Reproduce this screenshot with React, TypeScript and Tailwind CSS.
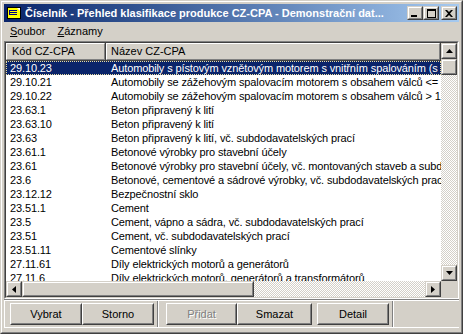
import React from "react";

const rows: [string, string][] = [
  ["29.10.23", "Automobily s pístovým vznětovým motorem s vnitřním spalováním (s naftovým nebo polonaftovým motorem)"],
  ["29.10.21", "Automobily se zážehovým spalovacím motorem s obsahem válců <= 1 500 cm3"],
  ["29.10.22", "Automobily se zážehovým spalovacím motorem s obsahem válců > 1 500 cm3"],
  ["23.63.1", "Beton připravený k lití"],
  ["23.63.10", "Beton připravený k lití"],
  ["23.63", "Beton připravený k lití, vč. subdodavatelských prací"],
  ["23.61.1", "Betonové výrobky pro stavební účely"],
  ["23.61", "Betonové výrobky pro stavební účely, vč. montovaných staveb a subdodavatelských prací"],
  ["23.6", "Betonové, cementové a sádrové výrobky, vč. subdodavatelských prací"],
  ["23.12.12", "Bezpečnostní sklo"],
  ["23.51.1", "Cement"],
  ["23.5", "Cement, vápno a sádra, vč. subdodavatelských prací"],
  ["23.51", "Cement, vč. subdodavatelských prací"],
  ["23.51.11", "Cementové slínky"],
  ["27.11.61", "Díly elektrických motorů a generátorů"],
  ["27.11.6", "Díly elektrických motorů, generátorů a transformátorů"],
];

// raised 3d box like scrollbar buttons and caption buttons
function Raised({ className = "", children }: { className?: string; children?: React.ReactNode }) {
  return (
    <div className={`border border-t-[#d4d0c8] border-l-[#d4d0c8] border-r-[#404040] border-b-[#404040] ${className}`}>
      <div className="w-full h-full border border-t-white border-l-white border-r-[#808080] border-b-[#808080] bg-[#d4d0c8] flex items-center justify-center">
        {children}
      </div>
    </div>
  );
}

function PushButton({ label, width, disabled }: { label: string; width: string; disabled?: boolean }) {
  return (
    <div className={`h-[22px] ${width} border border-t-white border-l-white border-r-[#404040] border-b-[#404040]`}>
      <div className="w-full h-full border border-t-[#d4d0c8] border-l-[#d4d0c8] border-r-[#808080] border-b-[#808080] flex items-center justify-center">
        {disabled ? (
          <span className="text-[#808080] [text-shadow:1px_1px_0_#ffffff]">{label}</span>
        ) : (
          <span className="text-black">{label}</span>
        )}
      </div>
    </div>
  );
}

const Arrow = ({ dir }: { dir: "up" | "down" | "left" | "right" }) => {
  const pts = {
    up: "3.5,0 7,4 0,4",
    down: "0,0 7,0 3.5,4",
    left: "4,0 4,7 0,3.5",
    right: "0,0 4,3.5 0,7",
  }[dir];
  const vertical = dir === "up" || dir === "down";
  return (
    <svg width={vertical ? 7 : 4} height={vertical ? 4 : 7} viewBox={vertical ? "0 0 7 4" : "0 0 4 7"}>
      <polygon points={pts} fill="#000" />
    </svg>
  );
};

const checker = "bg-[repeating-conic-gradient(#ffffff_0_25%,#d4d0c8_0_50%)] bg-[length:2px_2px]";

export default function App() {
  return (
    <div className="w-[463px] h-[334px] bg-[#d4d0c8] font-['Liberation_Sans',Arial,sans-serif] text-[11px] text-black select-none">
      <div className="w-full h-full border border-t-[#d4d0c8] border-l-[#d4d0c8] border-r-[#404040] border-b-[#404040]">
        <div className="w-full h-full border border-t-white border-l-white border-r-[#808080] border-b-[#808080] p-[2px] flex flex-col">
          {/* title bar */}
          <div className="h-[18px] flex items-center bg-gradient-to-r from-[#0a246a] to-[#a6caf0] pl-[2px] pr-[2px]">
            <svg width="16" height="16" viewBox="0 0 16 16" className="shrink-0">
              <rect x="1.5" y="2.5" width="13" height="11" fill="#ffff00" stroke="#000" />
              <polygon points="11,3 14,3 14,6" fill="#ffffff" />
              <rect x="4" y="5" width="7" height="1" fill="#000080" />
              <rect x="4" y="7" width="7" height="1" fill="#000080" />
              <rect x="4" y="9" width="7" height="1" fill="#000080" />
              <rect x="3" y="5" width="1" height="5" fill="#000080" />
            </svg>
            <div className="ml-[3px] flex-1 min-w-0 whitespace-nowrap overflow-hidden text-white font-bold text-[11px] leading-[18px]">
              Číselník - Přehled klasifikace produkce CZ-CPA - Demonstrační dat...
            </div>
            <div className="flex items-center shrink-0">
              <Raised className="w-[16px] h-[14px]">
                <div className="w-[6px] h-[2px] bg-black mt-[6px] mr-[3px]" />
              </Raised>
              <Raised className="w-[16px] h-[14px]">
                <div className="w-[9px] h-[9px] border border-black border-t-2" />
              </Raised>
              <Raised className="w-[16px] h-[14px] ml-[2px]">
                <svg width="8" height="7" viewBox="0 0 8 7">
                  <path d="M0 0h2l2 2 2-2h2L5 3.5 8 7H6L4 5 2 7H0l3-3.5z" fill="#000" />
                </svg>
              </Raised>
            </div>
          </div>

          {/* menu */}
          <div className="h-[19px] flex items-center">
            <span className="px-[6px]">
              <span className="underline underline-offset-[1px]">S</span>oubor
            </span>
            <span className="px-[6px]">
              <span className="underline underline-offset-[1px]">Z</span>áznamy
            </span>
          </div>

          {/* list view */}
          <div className="h-[258px] border border-t-[#808080] border-l-[#808080] border-r-white border-b-white">
            <div className="w-full h-full border border-t-[#404040] border-l-[#404040] border-r-[#d4d0c8] border-b-[#d4d0c8] flex bg-white">
              <div className="flex-1 min-w-0 flex flex-col">
                <div className="h-[18px] flex shrink-0">
                  <div className="w-[100px] border-r border-b border-r-[#404040] border-b-[#404040]">
                    <div className="h-full border border-t-white border-l-white border-r-[#808080] border-b-[#808080] bg-[#d4d0c8] pl-[5px] leading-[15px]">
                      Kód CZ-CPA
                    </div>
                  </div>
                  <div className="flex-1 border-r border-b border-r-[#404040] border-b-[#404040]">
                    <div className="h-full border border-t-white border-l-white border-r-[#808080] border-b-[#808080] bg-[#d4d0c8] pl-[4px] leading-[15px]">
                      Název CZ-CPA
                    </div>
                  </div>
                </div>
                <div className="flex-1 overflow-hidden tracking-[-0.12px]">
                  {rows.map(([code, name], i) => (
                    <div
                      key={code}
                      className={`h-[14px] flex leading-[12px] whitespace-nowrap ${
                        i === 0 ? "bg-[#0a246a] text-white border border-dotted border-[#e8dca0]" : "border border-transparent"
                      }`}
                    >
                      <div className="w-[100px] shrink-0 pl-[3px] overflow-hidden">{code}</div>
                      <div className="pl-[4px]">{name}</div>
                    </div>
                  ))}
                </div>
                <div className="h-[16px] flex shrink-0">
                  <Raised className="w-[16px] h-[16px] shrink-0">
                    <Arrow dir="left" />
                  </Raised>
                  <Raised className="w-[232px] h-[16px] shrink-0" />
                  <div className={`flex-1 ${checker}`} />
                  <Raised className="w-[16px] h-[16px] shrink-0">
                    <Arrow dir="right" />
                  </Raised>
                </div>
              </div>
              <div className="w-[16px] shrink-0 flex flex-col">
                <Raised className="w-[16px] h-[16px] shrink-0">
                  <Arrow dir="up" />
                </Raised>
                <Raised className="w-[16px] h-[16px] shrink-0" />
                <div className={`flex-1 ${checker}`} />
                <Raised className="w-[16px] h-[16px] shrink-0">
                  <Arrow dir="down" />
                </Raised>
                <div className="h-[16px] shrink-0 bg-[#d4d0c8]" />
              </div>
            </div>
          </div>

          {/* button panel */}
          <div className="h-[29px] border-t border-t-[#808080]">
            <div className="h-full border-t border-t-white border-b border-b-white flex">
              <div className="flex items-start pt-[2px] pl-[5px] pr-[3px] border-l border-l-white border-r border-r-[#808080]">
                <PushButton label="Vybrat" width="w-[72px]" />
                <PushButton label="Storno" width="w-[72px]" />
              </div>
              <div className="flex items-start pt-[2px] pl-[7px] pr-[3px] border-l border-l-white border-r border-r-[#808080]">
                <PushButton label="Přidat" width="w-[71px]" disabled />
                <PushButton label="Smazat" width="w-[75px]" />
                <div className="ml-[5px]">
                  <PushButton label="Detail" width="w-[72px]" />
                </div>
              </div>
              <div className="flex-1 border-l border-l-white" />
            </div>
          </div>
        </div>
      </div>
    </div>
  );
}
